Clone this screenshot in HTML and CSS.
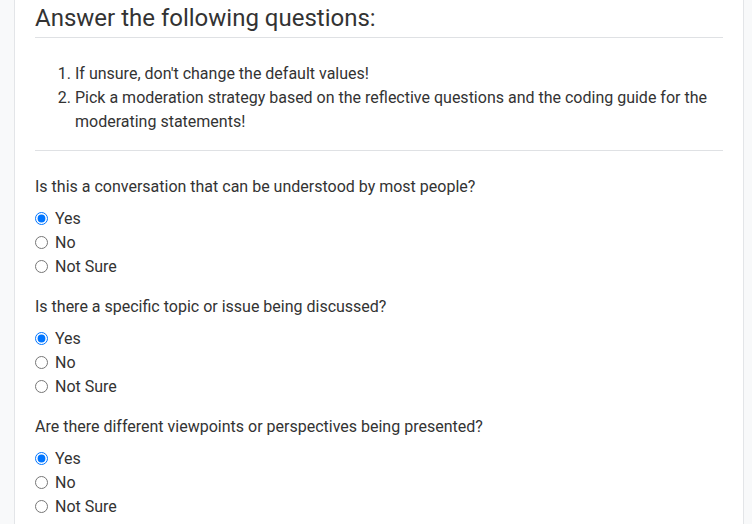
FILE: index.html
```html
<!DOCTYPE html>
<html lang="en">
<head>
<meta charset="utf-8">
<title>Questions</title>
<link rel="stylesheet" href="styles.css">
</head>
<body>
<main class="card">
  <h2 class="title">Answer the following questions:</h2>
  <ol class="instructions">
    <li>If unsure, don't change the default values!</li>
    <li>Pick a moderation strategy based on the reflective questions and the coding guide for the moderating statements!</li>
  </ol>
  <hr class="divider">
  <form class="questions">
    <fieldset class="group">
      <p class="question">Is this a conversation that can be understood by most people?</p>
      <label class="option"><input type="radio" name="q1" checked><span>Yes</span></label>
      <label class="option"><input type="radio" name="q1"><span>No</span></label>
      <label class="option"><input type="radio" name="q1"><span>Not Sure</span></label>
    </fieldset>
    <fieldset class="group">
      <p class="question">Is there a specific topic or issue being discussed?</p>
      <label class="option"><input type="radio" name="q2" checked><span>Yes</span></label>
      <label class="option"><input type="radio" name="q2"><span>No</span></label>
      <label class="option"><input type="radio" name="q2"><span>Not Sure</span></label>
    </fieldset>
    <fieldset class="group">
      <p class="question">Are there different viewpoints or perspectives being presented?</p>
      <label class="option"><input type="radio" name="q3" checked><span>Yes</span></label>
      <label class="option"><input type="radio" name="q3"><span>No</span></label>
      <label class="option"><input type="radio" name="q3"><span>Not Sure</span></label>
    </fieldset>
  </form>
</main>
</body>
</html>
```
FILE: styles.css
```css
html, body {
  margin: 0;
  padding: 0;
  background: #f8f9fa;
}
body {
  font-family: Roboto, "Liberation Sans", sans-serif;
  font-size: 16px;
  line-height: 24px;
  color: #333;
}
.card {
  box-sizing: border-box;
  width: 730px;
  margin-left: 14px;
  background: #fff;
  border-left: 1px solid #e3e5e8;
  border-right: 1px solid #e3e5e8;
  padding: 4px 20px 40px;
  min-height: 524px;
}
.title {
  margin: 0;
  font-size: 24px;
  font-weight: 400;
  line-height: 28.8px;
  padding-bottom: 4px;
  border-bottom: 1px solid #dfe1e4;
}
.instructions {
  margin: 24px 0 16px;
  padding-left: 40px;
}
.divider {
  margin: 0;
  border: 0;
  border-top: 1px solid #dfe1e4;
}
.questions {
  margin-top: 24px;
}
.group {
  margin: 0 0 16px;
  padding: 0;
  border: 0;
  display: flex;
  flex-direction: column;
}
.question {
  margin: 0 0 8px;
}
.option {
  display: flex;
  align-items: center;
  height: 24px;
}
.option input {
  width: 13px;
  height: 13px;
  margin: 0 7px 0 0;
}
```
